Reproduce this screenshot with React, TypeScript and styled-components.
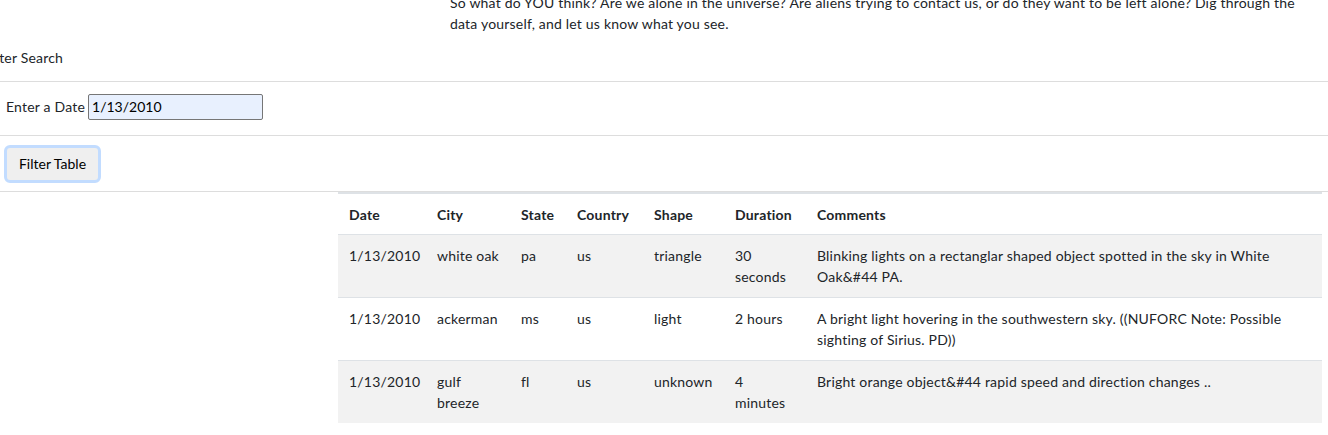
import React from "react";
import styled, { createGlobalStyle } from "styled-components";

const GlobalStyle = createGlobalStyle`
    html, body {
        margin: 0;
        padding: 0;
        background-color: #FFFFFF;
        overflow: hidden;
    }
    body {
        font-family: Lato, "Noto Sans", sans-serif;
        font-size: 14px;
        line-height: 21px;
        letter-spacing: 0.2px;
        color: #212529;
    }
`;

const Page = styled.div`
    width: 1328px;
    height: 435px;
    overflow: hidden;
    display: flex;
    flex-direction: column;
`;

const Intro = styled.p`
    margin: -8px 0 0 450px;
    width: 860px;
    line-height: 21px;
`;

const SideHeading = styled.div`
    padding: 13px 0 13px;
    text-indent: -16px;
    line-height: 21px;
    border-bottom: 1px solid #DDDDDD;
`;

const FilterRow = styled.div`
    display: flex;
    align-items: center;
    gap: 3px;
    height: 49px;
    padding: 0 0 4px 6px;
    border-bottom: 1px solid #DDDDDD;
`;

const Label = styled.label`
    white-space: nowrap;
`;

const DateInput = styled.input`
    box-sizing: border-box;
    width: 175px;
    height: 26px;
    padding: 0 3px;
    border: 1px solid #767676;
    border-radius: 2px;
    background-color: #E8F0FE;
    font: inherit;
    color: #000000;
    outline: none;
`;

const ButtonRow = styled.div`
    display: flex;
    align-items: center;
    height: 55px;
    padding-left: 4px;
    border-bottom: 1px solid #DDDDDD;
`;

const FilterButton = styled.button`
    box-sizing: border-box;
    width: 97px;
    height: 38px;
    border: 3px solid #C2DCFF;
    border-radius: 6px;
    background-color: #EFEFEF;
    font: inherit;
    color: #000000;
    cursor: pointer;
`;

const TableWrap = styled.div`
    margin-left: 338px;
    width: 984px;
`;

const Table = styled.table`
    width: 100%;
    border-collapse: collapse;
    table-layout: fixed;
    border-top: 2px solid #DEE2E6;
`;

const Th = styled.th<{ w?: number }>`
    box-sizing: border-box;
    width: ${(p) => (p.w ? `${p.w}px` : "auto")};
    padding: 10px 11px 9px;
    text-align: left;
    vertical-align: top;
    font-weight: 700;
`;

const Tr = styled.tr<{ striped?: boolean }>`
    background-color: ${(p) => (p.striped ? "#F2F2F2" : "#FFFFFF")};
    border-top: 1px solid #DEE2E6;
`;

const Td = styled.td`
    padding: 10px 11px;
    vertical-align: top;
`;

const columns = [
    { name: "Date", w: 88 },
    { name: "City", w: 84 },
    { name: "State", w: 56 },
    { name: "Country", w: 77 },
    { name: "Shape", w: 81 },
    { name: "Duration", w: 82 },
    { name: "Comments" },
];

const sightings = [
    ["1/13/2010", "white oak", "pa", "us", "triangle", "30 seconds", "Blinking lights on a rectanglar shaped object spotted in the sky in White Oak&#44 PA."],
    ["1/13/2010", "ackerman", "ms", "us", "light", "2 hours", "A bright light hovering in the southwestern sky. ((NUFORC Note: Possible sighting of Sirius. PD))"],
    ["1/13/2010", "gulf breeze", "fl", "us", "unknown", "4 minutes", "Bright orange object&#44 rapid speed and direction changes .."],
];

export default function App() {
    return (
        <Page>
            <GlobalStyle />
            <Intro>
                So what do YOU think? Are we alone in the universe? Are aliens trying to contact us, or do they want to be left alone? Dig through the data yourself, and let us know what you see.
            </Intro>
            <SideHeading>Filter Search</SideHeading>
            <FilterRow>
                <Label htmlFor="datetime">Enter a Date</Label>
                <DateInput id="datetime" type="text" defaultValue="1/13/2010" />
            </FilterRow>
            <ButtonRow>
                <FilterButton type="button">Filter Table</FilterButton>
            </ButtonRow>
            <TableWrap>
                <Table>
                    <thead>
                        <tr>
                            {columns.map((c) => (
                                <Th key={c.name} w={c.w}>{c.name}</Th>
                            ))}
                        </tr>
                    </thead>
                    <tbody>
                        {sightings.map((row, i) => (
                            <Tr key={i} striped={i % 2 === 0}>
                                {row.map((cell, j) => (
                                    <Td key={j}>{cell}</Td>
                                ))}
                            </Tr>
                        ))}
                    </tbody>
                </Table>
            </TableWrap>
        </Page>
    );
}
